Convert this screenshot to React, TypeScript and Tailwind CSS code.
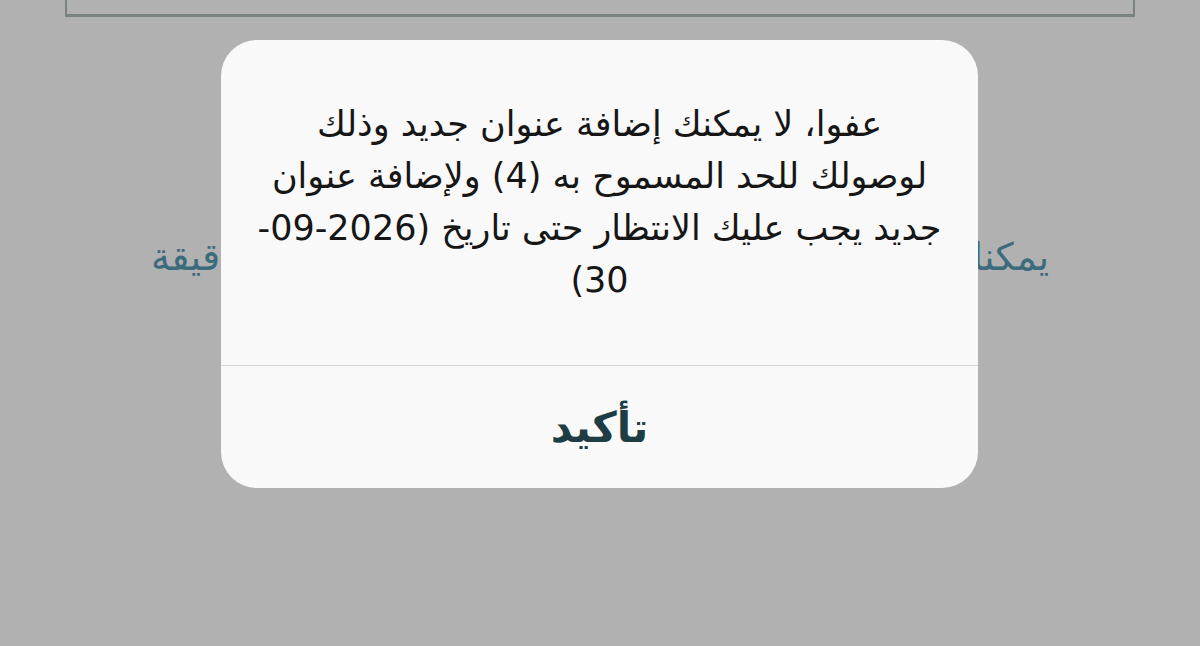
export default function App() {
  return (
    <div
      dir="rtl"
      className="relative h-[646px] w-[1200px] overflow-hidden bg-[#b1b1b1]"
      style={{ fontFamily: '"DejaVu Sans", "Noto Sans", sans-serif' }}
    >
      {/* underlying screen (dimmed) */}
      <div className="flex flex-col items-center">
        <div className="-mt-[40px] h-[57px] w-[1070px] border-x-2 border-b-[3px] border-[#7a8181]" />
        <div className="mt-[212px] flex w-[898px] justify-between text-[38px] leading-[56px] text-[#3b6b7c]">
          <span>يمكنك</span>
          <span>دقيقة</span>
        </div>
      </div>

      {/* alert dialog */}
      <div className="absolute left-[221px] top-[40px] flex w-[757px] flex-col overflow-hidden rounded-[36px] bg-[#f9f9f9]">
        <p className="px-[30px] pb-[59px] pt-[58px] text-center text-[35px] leading-[52px] text-[#161616]">
          عفوا، لا يمكنك إضافة عنوان جديد وذلك
          <br />
          لوصولك للحد المسموح به (4) ولإضافة عنوان
          <br />
          جديد يجب عليك الانتظار حتى تاريخ (2026-09-
          <br />
          30)
        </p>
        <div className="h-px bg-[#d4d4d4]" />
        <button className="flex h-[122px] items-center justify-center text-[42px] font-bold text-[#1e3c44]">
          تأكيد
        </button>
      </div>
    </div>
  );
}
